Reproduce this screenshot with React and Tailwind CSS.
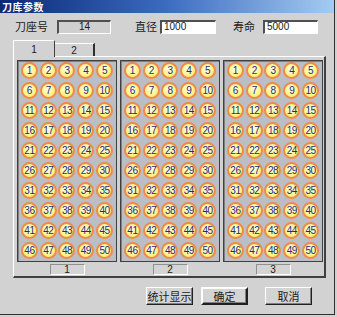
import React from 'react'

const cjk = "font-['SimSun','Noto_Sans_CJK_SC',sans-serif]"

const Ball = ({ n }) => (
  <div className="w-[17px] h-[17px] rounded-full border-2 border-[#ee8a4a] bg-[radial-gradient(circle_at_45%_40%,#ffffe8_0%,#fff48a_55%,#ffe060_100%)] flex items-center justify-center text-[10px] leading-none tracking-[-0.5px] text-[#1c2a8a] font-['Liberation_Sans',sans-serif]">
    {n}
  </div>
)

const Magazine = ({ label }) => (
  <div className="flex flex-col items-center">
    <div className="w-[100px] h-[202px] border border-[#404040] bg-[#bcbec6] shadow-[inset_1px_1px_0_#808080] grid grid-cols-5 content-start gap-y-[3px] px-[2px] pt-px">
      {Array.from({ length: 50 }, (_, i) => (
        <div key={i} className="flex justify-center">
          <Ball n={i + 1} />
        </div>
      ))}
    </div>
    <div className="mt-[2px] w-[35px] h-[11px] bg-[#d4d4d4] border-t border-l border-[#909090] border-b-white border-r-white border-b border-r flex items-center justify-center text-[10px] leading-none text-[#202020] font-['Liberation_Sans',sans-serif]">
      {label}
    </div>
  </div>
)

const Field = ({ value, white, className }) => (
  <div
    className={`h-[14px] border-t-2 border-l-2 border-t-[#505050] border-l-[#505050] border-b border-r border-b-white border-r-white flex items-center text-[10px] leading-none font-['Liberation_Sans',sans-serif] text-[#202020] ${white ? 'bg-white pl-[2px]' : 'bg-[#cfcfcf] justify-center'} ${className}`}
  >
    {value}
  </div>
)

const Button = ({ children, className }) => (
  <button
    className={`h-[18px] w-[47px] bg-[#d4d4d4] border border-t-white border-l-white border-b-[#202020] border-r-[#202020] shadow-[inset_-1px_-1px_0_#808080] text-[11px] leading-none text-[#202020] ${cjk} ${className}`}
  >
    {children}
  </button>
)

export default function App() {
  return (
    <div className="w-[337px] h-[317px] bg-[#d2d2d2] overflow-hidden">
      <div className="w-[335px] h-[315px] border-r border-b border-[#303030] flex flex-col">
        <div className="h-[13px] bg-gradient-to-r from-[#0c2a78] via-[#3c6cc0] to-[#a6caf0] flex items-center pl-[2px] text-[10px] leading-none font-bold text-white tracking-[0.5px]">
          <span className={cjk}>刀库参数</span>
        </div>

        <div className={`flex items-center mt-[6px] h-[15px] text-[11px] text-[#202020] ${cjk}`}>
          <span className="ml-[15px] w-[42px]">刀座号</span>
          <Field value="14" className="w-[54px]" />
          <span className="ml-[24px] w-[25px]">直径</span>
          <Field value="1000" white className="w-[56px]" />
          <span className="ml-[17px] w-[30px]">寿命</span>
          <Field value="5000" white className="w-[55px]" />
        </div>

        <div className="flex items-end ml-[13px] mt-[5px] h-[17px] font-['Liberation_Sans',sans-serif] text-[10px] text-[#202020]">
          <div className="w-[42px] h-[17px] border-t border-l border-white border-r border-r-[#404040] bg-[#d2d2d2] flex items-center justify-center -mb-px relative z-10">
            1
          </div>
          <div className="w-[40px] h-[13px] border-t border-white border-r-2 border-r-[#303030] bg-[#d2d2d2] flex items-center justify-center">
            2
          </div>
        </div>

        <div className="ml-[13px] w-[313px] h-[222px] border-t border-l border-white border-b-2 border-r-2 border-b-[#404040] border-r-[#404040] flex gap-[3px] pl-[3px] pt-[3px]">
          <Magazine label="1" />
          <Magazine label="2" />
          <Magazine label="3" />
        </div>

        <div className="flex mt-[9px] ml-[146px] gap-[8px]">
          <Button>统计显示</Button>
          <Button className="border-[#000] border-2">确定</Button>
          <Button className="ml-[9px]">取消</Button>
        </div>
      </div>
    </div>
  )
}
